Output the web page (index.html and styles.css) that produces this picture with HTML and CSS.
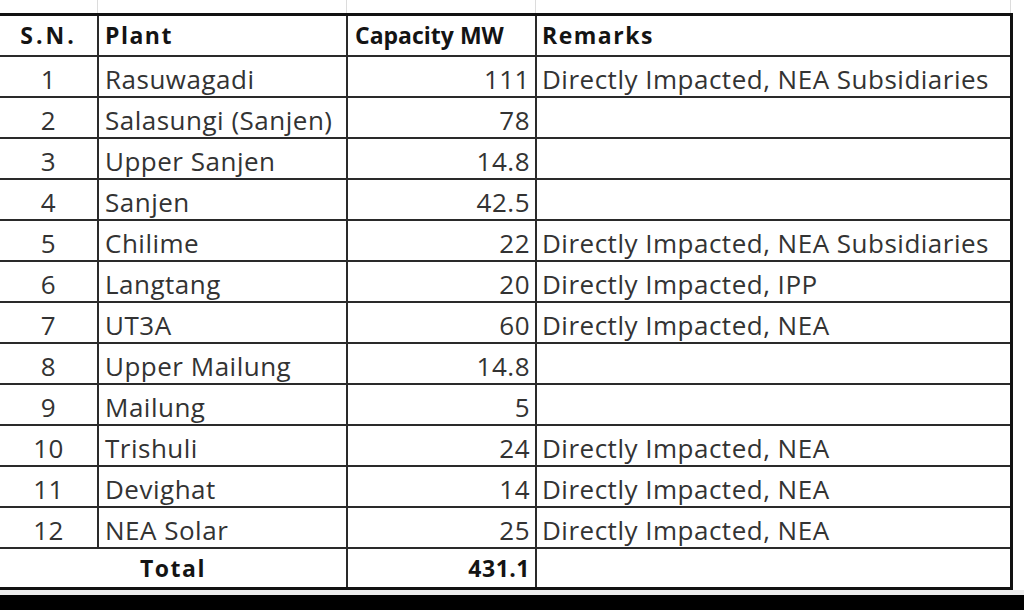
FILE: index.html
```html
<!DOCTYPE html>
<html>
<head>
<meta charset="utf-8">
<link rel="stylesheet" href="styles.css">
</head>
<body>
<div class="sheet">
  <div class="gridstrip">
    <div class="gcell c1"></div>
    <div class="gcell c2"></div>
    <div class="gcell c3"></div>
    <div class="gcell c4"></div>
    <div class="gcell c5"></div>
  </div>
  <table class="plants">
    <colgroup>
      <col class="w-sn">
      <col class="w-plant">
      <col class="w-cap">
      <col class="w-rem">
    </colgroup>
    <thead>
      <tr>
        <th class="sn">S.N.</th>
        <th class="plant">Plant</th>
        <th class="cap-h">Capacity MW</th>
        <th class="rem">Remarks</th>
      </tr>
    </thead>
    <tbody>
      <tr><td class="sn">1</td><td class="plant">Rasuwagadi</td><td class="cap">111</td><td class="rem">Directly Impacted, NEA Subsidiaries</td></tr>
      <tr><td class="sn">2</td><td class="plant">Salasungi (Sanjen)</td><td class="cap">78</td><td class="rem"></td></tr>
      <tr><td class="sn">3</td><td class="plant">Upper Sanjen</td><td class="cap">14.8</td><td class="rem"></td></tr>
      <tr><td class="sn">4</td><td class="plant">Sanjen</td><td class="cap">42.5</td><td class="rem"></td></tr>
      <tr><td class="sn">5</td><td class="plant">Chilime</td><td class="cap">22</td><td class="rem">Directly Impacted, NEA Subsidiaries</td></tr>
      <tr><td class="sn">6</td><td class="plant">Langtang</td><td class="cap">20</td><td class="rem">Directly Impacted, IPP</td></tr>
      <tr><td class="sn">7</td><td class="plant">UT3A</td><td class="cap">60</td><td class="rem">Directly Impacted, NEA</td></tr>
      <tr><td class="sn">8</td><td class="plant">Upper Mailung</td><td class="cap">14.8</td><td class="rem"></td></tr>
      <tr><td class="sn">9</td><td class="plant">Mailung</td><td class="cap">5</td><td class="rem"></td></tr>
      <tr><td class="sn">10</td><td class="plant">Trishuli</td><td class="cap">24</td><td class="rem">Directly Impacted, NEA</td></tr>
      <tr><td class="sn">11</td><td class="plant">Devighat</td><td class="cap">14</td><td class="rem">Directly Impacted, NEA</td></tr>
      <tr><td class="sn">12</td><td class="plant">NEA Solar</td><td class="cap">25</td><td class="rem">Directly Impacted, NEA</td></tr>
      <tr class="total"><td class="total-label" colspan="2">Total</td><td class="cap total-val">431.1</td><td class="rem"></td></tr>
    </tbody>
  </table>
  <div class="gap"></div>
  <div class="blackbar"></div>
</div>
</body>
</html>
```

FILE: styles.css
```css
html, body {
  margin: 0;
  padding: 0;
  background: #ffffff;
}

.sheet {
  width: 1024px;
  height: 610px;
  display: flex;
  flex-direction: column;
  overflow: hidden;
  font-family: "Open Sans", "Liberation Sans", sans-serif;
  color: #333333;
}

.gridstrip {
  height: 13px;
  display: grid;
  grid-template-columns: 98px 249px 189px 475px 13px;
  flex: none;
}

.gcell {
  border-right: 1px solid #dcdcdc;
}

.gcell.c5 {
  border-right: none;
}

.plants {
  border-collapse: collapse;
  table-layout: fixed;
  width: 1011px;
  flex: none;
  font-size: 26px;
  letter-spacing: 0.5px;
}

.w-sn { width: 98px; }
.w-plant { width: 249px; }
.w-cap { width: 189px; }
.w-rem { width: 475px; }

.plants th,
.plants td {
  border: 2px solid #2a2a2a;
  height: 39px;
  padding: 0 6px;
  white-space: nowrap;
  overflow: hidden;
  line-height: 1;
}

.plants td {
  height: 35px;
  padding-top: 4px;
}

.plants thead th {
  border-top: 3px solid #111111;
  height: 39px;
  font-size: 23px;
  letter-spacing: 1.5px;
  font-weight: 700;
  color: #141414;
  text-align: left;
}

.plants thead th.sn {
  letter-spacing: 3px;
  text-align: center;
}

.plants thead th.cap-h {
  letter-spacing: 0;
  padding-left: 7px;
}

.plants tr > :first-child {
  border-left: none;
}

.plants tr > :last-child {
  border-right: 3px solid #111111;
}

.plants tr.total td {
  border-bottom: 3px solid #111111;
  height: 38px;
  padding-top: 0;
}

.plants .sn {
  text-align: center;
}

.plants .plant {
  text-align: left;
}

.plants .cap {
  text-align: right;
  padding-right: 5px;
}

.plants .rem {
  text-align: left;
  padding-left: 5px;
}

.plants .total-label {
  text-align: center;
  font-size: 23px;
  letter-spacing: 1.5px;
  font-weight: 700;
  color: #141414;
}

.plants .total-val {
  font-size: 23px;
  letter-spacing: 0.5px;
  font-weight: 700;
  color: #141414;
}

.gap {
  height: 5px;
  flex: none;
  background: #ececec;
}

.blackbar {
  flex: 1;
  background: #000000;
}
```
